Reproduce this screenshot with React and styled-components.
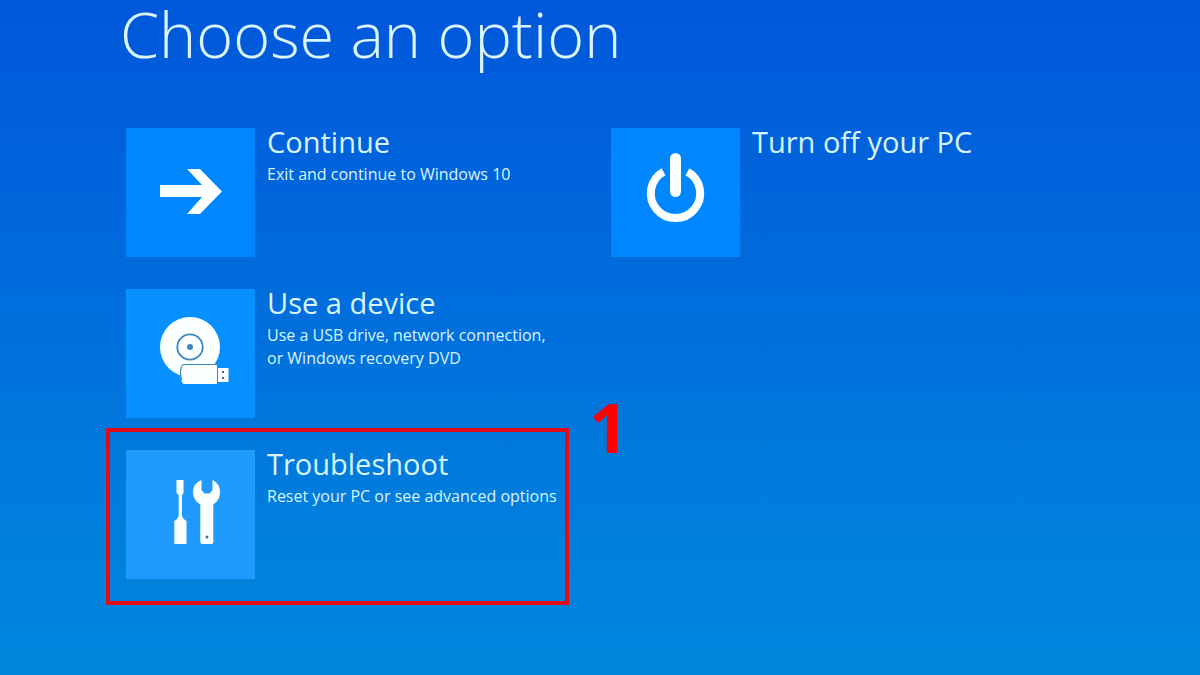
import React from 'react';
import styled, { createGlobalStyle } from 'styled-components';

const ArrowIcon = () => (
  <Icon viewBox="0 0 129 129" aria-hidden="true">
    <path d="M34 57H76L61 41H74L96 63.5L74 86H61L76 69H34Z" />
  </Icon>
);

const PowerIcon = () => (
  <Icon viewBox="0 0 129 129" aria-hidden="true">
    <path
      d="M52.5 43.8A24.7 24.7 0 1 0 76.5 43.8"
      fill="none"
      stroke="#fbffff"
      strokeWidth="8"
    />
    <rect x="59" y="25" width="11" height="44" rx="5.5" />
  </Icon>
);

const DeviceIcon = () => (
  <Icon viewBox="0 0 129 129" aria-hidden="true">
    <circle cx="64" cy="58" r="30" />
    <circle cx="64" cy="58" r="12.7" fill="none" stroke="#3a87bd" strokeWidth="1.8" />
    <circle cx="64" cy="58" r="3" fill="#3a87bd" />
    <path d="M57 76H91V95H57.5Q54.5 92 54.5 85.5Q54.5 79 57 76Z" />
    <path
      d="M56 91Q54.5 88 54.5 84Q54.5 75.5 58.5 75.5H91"
      fill="none"
      stroke="#3a87bd"
      strokeWidth="1.2"
    />
    <rect x="92" y="79" width="10.5" height="14" />
    <rect x="96" y="82" width="2" height="2" fill="#3a6f9d" />
    <rect x="96" y="88" width="2" height="2" fill="#3a6f9d" />
  </Icon>
);

const ToolsIcon = () => (
  <Icon viewBox="0 0 129 129" aria-hidden="true">
    <path d="M50.5 30H57.5V43L56 45V66Q56.5 68.5 60.5 71V94H48.3V71Q52.3 68.5 52.7 66V45L50.5 43Z" />
    <path d="M75.5 30V40L78.5 43.5H83.5L86.5 40V30Q94 33.5 94 42Q94 50.5 87.3 54.5V92Q87.3 94 85.3 94H76.3Q74.3 94 74.3 92V54.5Q67 50.5 67 42Q67 33.5 75.5 30Z" />
    <circle cx="81" cy="87" r="1.5" fill="#4a6c8c" />
  </Icon>
);

const OPTIONS = [
  {
    id: 'continue',
    name: 'Continue',
    lines: ['Exit and continue to Windows 10'],
    color: '#0086ff',
    icon: ArrowIcon,
  },
  {
    id: 'turnOff',
    name: 'Turn off your PC',
    lines: [],
    color: '#0086ff',
    icon: PowerIcon,
  },
  {
    id: 'device',
    name: 'Use a device',
    lines: ['Use a USB drive, network connection,', 'or Windows recovery DVD'],
    color: '#0790ff',
    icon: DeviceIcon,
  },
  {
    id: 'troubleshoot',
    name: 'Troubleshoot',
    lines: ['Reset your PC or see advanced options'],
    color: '#209aff',
    icon: ToolsIcon,
    step: 1,
  },
];

const App = () => {
  return (
    <>
      <GlobalStyle />
      <Page>
        <Heading>Choose an option</Heading>
        <Options>
          {OPTIONS.map(({ id, name, lines, color, icon: OptionIcon, step }) => {
            return (
              <Cell key={id} $first={id === 'device' || id === 'troubleshoot'}>
                <Option type="button">
                  <Tile $color={color}>
                    <OptionIcon />
                  </Tile>
                  <Text>
                    <Name>{name}</Name>
                    {lines.map(line => (
                      <Line key={line}>{line}</Line>
                    ))}
                  </Text>
                </Option>
                {step && <Frame />}
                {step && <Step>{step}</Step>}
              </Cell>
            );
          })}
        </Options>
      </Page>
    </>
  );
};

export default App;

const GlobalStyle = createGlobalStyle`
  * {
    box-sizing: border-box;
  }
  body {
    margin: 0;
    font-family: 'Open Sans', 'Noto Sans', sans-serif;
  }
`;

const Page = styled.main`
  min-height: 100vh;
  padding: 0 104px 64px 120px;
  background: linear-gradient(#0057da, #0069dc 36%, #007adc 68%, #0088de);
`;

const Heading = styled.h1`
  margin: 0;
  padding-bottom: 60px;
  color: #dcf6ff;
  font-size: 63px;
  font-weight: 300;
  line-height: 68px;
  white-space: nowrap;
`;

const Options = styled.div`
  display: grid;
  grid-template-columns: 1fr 1fr;
  row-gap: 32px;
  padding-left: 6px;
`;

const Cell = styled.div`
  position: relative;
  grid-column: ${({ $first }) => ($first ? 1 : 'auto')};
`;

const Option = styled.button`
  display: flex;
  align-items: flex-start;
  gap: 12px;
  padding: 0;
  border: 0;
  background: none;
  color: #d8f4ff;
  font-family: inherit;
  text-align: left;
  cursor: pointer;
`;

const Tile = styled.span`
  flex: none;
  width: 129px;
  height: 129px;
  background: ${({ $color }) => $color};
`;

const Icon = styled.svg`
  display: block;
  width: 100%;
  fill: #fbffff;
`;

const Text = styled.span`
  display: flex;
  flex-direction: column;
  white-space: nowrap;
`;

const Name = styled.span`
  margin-bottom: 7px;
  font-size: 29px;
  line-height: 28px;
`;

const Line = styled.span`
  font-size: 16px;
  line-height: 23px;
`;

const Frame = styled.span`
  position: absolute;
  top: -22px;
  left: -20px;
  width: 463px;
  height: 177px;
  border: 4px solid #e30b17;
  pointer-events: none;
`;

const Step = styled.span`
  position: absolute;
  top: -57px;
  left: 463px;
  color: #ff0000;
  font-size: 68px;
  font-weight: 700;
  line-height: 68px;
`;
